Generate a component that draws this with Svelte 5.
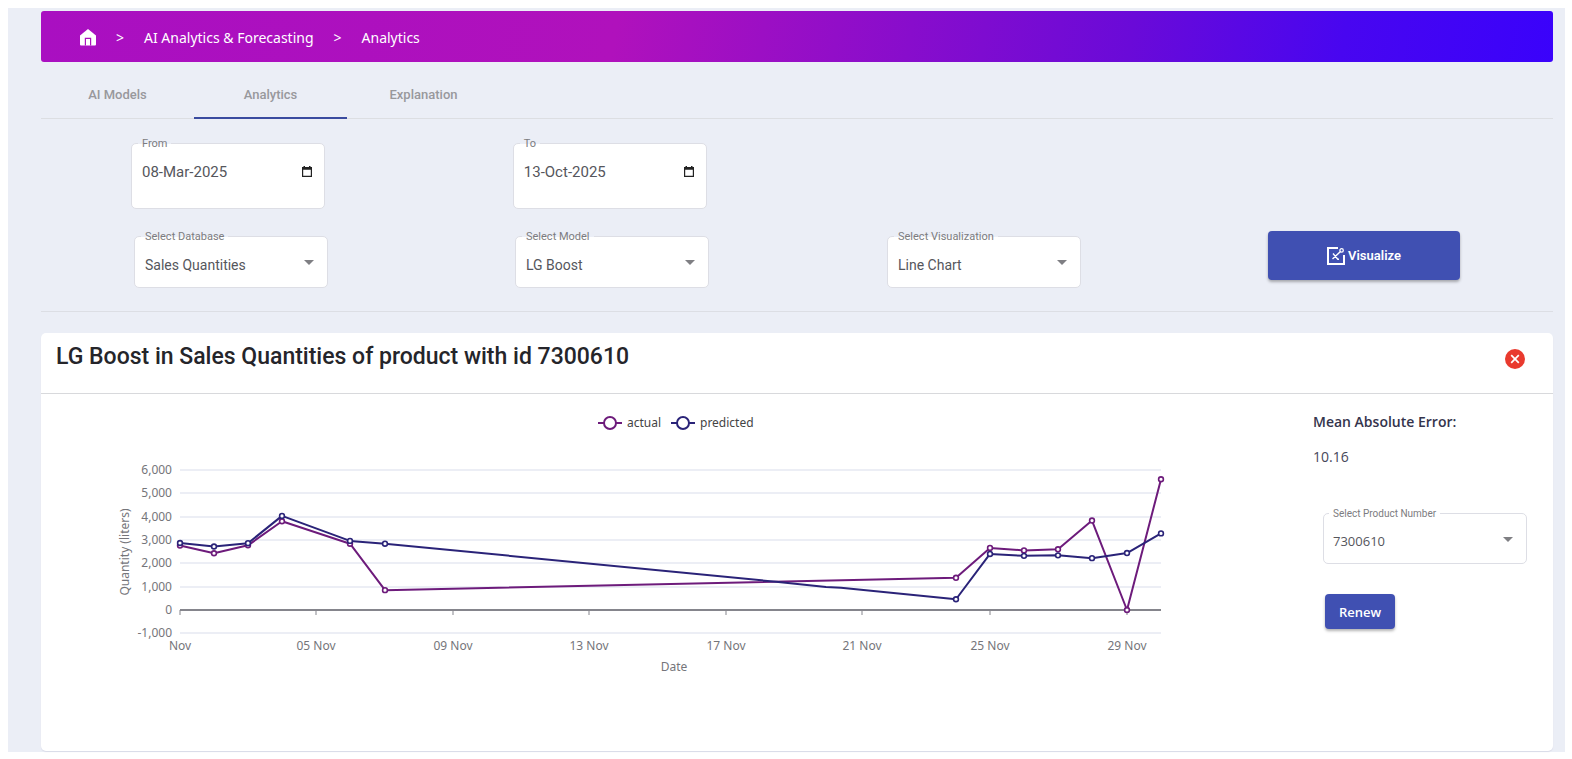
<script lang="ts">
  type Point = [number, number];

  const tabs = ["AI Models", "Analytics", "Explanation"];
  let activeTab = $state("Analytics");

  let from = $state("08-Mar-2025");
  let to = $state("13-Oct-2025");
  let product = $state("7300610");

  // plot area of the chart, in svg units
  const left = 139;
  const right = 1120;
  const zeroY = 216;
  const unit = 0.02335;

  const yTicks = [6000, 5000, 4000, 3000, 2000, 1000, 0, -1000];
  const xTicks = [
    { x: 139, label: "Nov" },
    { x: 275, label: "05 Nov" },
    { x: 412, label: "09 Nov" },
    { x: 548, label: "13 Nov" },
    { x: 685, label: "17 Nov" },
    { x: 821, label: "21 Nov" },
    { x: 949, label: "25 Nov" },
    { x: 1086, label: "29 Nov" },
  ];

  const days = [139, 173, 207, 241, 309, 344, 915, 949, 983, 1017, 1051, 1086, 1120];
  const actual = [2760, 2430, 2770, 3800, 2840, 850, 1380, 2660, 2550, 2600, 3830, 0, 5600];
  const predicted = [2870, 2720, 2860, 4030, 2960, 2840, 460, 2400, 2320, 2340, 2220, 2440, 3280];

  const y = (value: number) => zeroY - value * unit;
  const toPoints = (values: number[]): Point[] => values.map((v, i) => [days[i], y(v)]);

  const actualPoints = toPoints(actual);
  const predictedPoints = toPoints(predicted);
  // the forecast has unmarked values in the gap between the samples
  const predictedLine: Point[] = [
    ...predictedPoints.slice(0, 6),
    [735, y(1210)],
    [785, y(980)],
    [800, y(950)],
    ...predictedPoints.slice(6),
  ];

  const series = [
    { name: "actual", color: "#6d1b7b", line: actualPoints, marks: actualPoints, legendX: 569 },
    { name: "predicted", color: "#2a2378", line: predictedLine, marks: predictedPoints, legendX: 642 },
  ];
</script>

<div class="page">
  <nav class="breadcrumb" aria-label="Breadcrumb">
    <a href="#home" aria-label="Home">
      <svg width="16" height="17" viewBox="0 0 16 17">
        <path d="M8 0 L16 6.5 V15.5 Q16 16.5 15 16.5 H1 Q0 16.5 0 15.5 V6.5 Z" fill="#fff" />
        <path d="M5.4 16.5 V9.4 H10.6 V16.5" fill="none" stroke="#ac12bd" stroke-width="1.2" />
      </svg>
    </a>
    <span>&gt;</span>
    <a href="#forecasting">AI Analytics &amp; Forecasting</a>
    <span>&gt;</span>
    <a href="#analytics">Analytics</a>
  </nav>

  <div class="tabs" role="tablist">
    {#each tabs as tab}
      <button
        class="tab"
        class:active={tab === activeTab}
        role="tab"
        aria-selected={tab === activeTab}
        onclick={() => (activeTab = tab)}>{tab}</button>
    {/each}
  </div>

  <form class="filters" onsubmit={(e) => e.preventDefault()}>
    <div class="row dates">
      <div class="field date">
        <label for="from">From</label>
        <input id="from" type="text" bind:value={from} />
        <button class="picker" type="button" aria-label="Pick start date">
          {@render calendar()}
        </button>
      </div>
      <div class="field date">
        <label for="to">To</label>
        <input id="to" type="text" bind:value={to} />
        <button class="picker" type="button" aria-label="Pick end date">
          {@render calendar()}
        </button>
      </div>
    </div>

    <div class="row">
      <div class="field">
        <label for="database">Select Database</label>
        <select id="database"><option>Sales Quantities</option></select>
      </div>
      <div class="field">
        <label for="model">Select Model</label>
        <select id="model"><option>LG Boost</option></select>
      </div>
      <div class="field">
        <label for="visualization">Select Visualization</label>
        <select id="visualization"><option>Line Chart</option></select>
      </div>
      <button class="primary visualize" type="submit">
        <svg width="18" height="18" viewBox="0 0 18 18" fill="none" stroke="#fff">
          <path d="M11 1 H1 V17 H17 V8" stroke-width="2" />
          <path d="M6 6.5 L11 12.5 M5.5 12 L13.5 4.5 M10.5 12.3 H12" stroke-width="1.4" />
          <circle cx="14.6" cy="3.4" r="1.7" stroke-width="1.3" />
        </svg>
        Visualize
      </button>
    </div>
  </form>

  <section class="card">
    <header>
      <h2>LG Boost in Sales Quantities of product with id {product}</h2>
      <button class="close" aria-label="Close">
        <svg width="20" height="20" viewBox="0 0 20 20">
          <circle cx="10" cy="10" r="10" fill="#e93a2e" />
          <path d="M6.2 6.2 L13.8 13.8 M13.8 6.2 L6.2 13.8" stroke="#fff" stroke-width="1.7" />
        </svg>
      </button>
    </header>

    <div class="card-body">
      <svg class="chart" viewBox="0 0 1252 357" role="img" aria-label="Actual and predicted quantity by date">
        {#each series as s}
          <g stroke={s.color} stroke-width="2">
            <line x1={s.legendX - 12} x2={s.legendX + 12} y1="29" y2="29" />
            <circle cx={s.legendX} cy="29" r="6" fill="#fff" />
          </g>
          <text class="legend" x={s.legendX + 17} y="33">{s.name}</text>
        {/each}

        {#each yTicks as tick}
          <line
            x1={left}
            x2={right}
            y1={Math.round(y(tick))}
            y2={Math.round(y(tick))}
            stroke={tick === 0 ? "#85858c" : "#e6e8f2"}
            stroke-width={tick === 0 ? 2 : 1.5} />
          <text x={left - 8} y={Math.round(y(tick)) + 4} text-anchor="end">{tick.toLocaleString("en-US")}</text>
        {/each}

        {#each xTicks as tick}
          <line x1={tick.x} x2={tick.x} y1={zeroY} y2={zeroY + 5} stroke="#85858c" />
          <text x={tick.x} y="256" text-anchor="middle">{tick.label}</text>
        {/each}

        <text x="633" y="277" text-anchor="middle">Date</text>
        <text x="0" y="0" text-anchor="middle" transform="translate(88 158) rotate(-90)">Quantity (liters)</text>

        {#each series as s}
          <g stroke={s.color} fill="none" stroke-width="2">
            <polyline points={s.line.map((p) => p.join(",")).join(" ")} stroke-linejoin="round" />
            {#each s.marks as [cx, cy]}
              <circle {cx} {cy} r="2.4" fill="#fff" stroke-width="1.6" />
            {/each}
          </g>
        {/each}
      </svg>

      <aside>
        <h3>Mean Absolute Error:</h3>
        <p>10.16</p>
        <div class="field product">
          <label for="product">Select Product Number</label>
          <select id="product" bind:value={product}><option>7300610</option></select>
        </div>
        <button class="primary renew">Renew</button>
      </aside>
    </div>
  </section>
</div>

{#snippet calendar()}
  <svg width="10" height="11" viewBox="0 0 10 11">
    <path d="M0.6 2 H9.4 V10.4 H0.6 Z" fill="none" stroke="#222" stroke-width="1.2" />
    <path d="M0 1 H10 V3.8 H0 Z M1.5 0 H3 V2 H1.5 Z M7 0 H8.5 V2 H7 Z" fill="#222" />
  </svg>
{/snippet}

<style>
  :global(body) {
    background: #fff;
  }

  .page {
    margin: 8px 7px 8px 8px;
    padding: 3px 12px 1px 33px;
    background: #ebeef6;
    font-family: Roboto, sans-serif;
    font-size: 14px;
  }

  button,
  input,
  select {
    font-family: inherit;
    border: none;
    margin: 0;
    padding: 0;
  }

  .breadcrumb {
    display: flex;
    align-items: center;
    gap: 20px;
    height: 51px;
    box-sizing: border-box;
    padding: 2px 39px 0;
    border-radius: 3px;
    background: linear-gradient(100deg, #a90fc1 0%, #b011bc 38%, #6a0ad8 72%, #4806f0 86%, #3a02fb 100%);
    color: #fff;
    font-family: "Noto Sans", sans-serif;
    font-size: 14px;
  }

  .breadcrumb a {
    display: flex;
    color: inherit;
    text-decoration: none;
  }

  .tabs {
    display: flex;
    height: 57px;
    box-sizing: border-box;
    padding-top: 8px;
    border-bottom: 1px solid #dcdee2;
  }

  .tab {
    width: 153px;
    height: 49px;
    padding-top: 2px;
    border-bottom: 2px solid transparent;
    background: none;
    color: #98989c;
    font-size: 13px;
    font-weight: 500;
  }

  .tab.active {
    border-bottom-color: #3a4b9f;
  }

  .filters {
    padding: 24px 0 23px;
    border-bottom: 1px solid #dcdee4;
  }

  .row {
    display: grid;
    grid-template-columns: 381fr 372fr 381fr 285fr;
    padding-left: 93px;
  }

  .dates {
    padding-left: 90px;
    margin-bottom: 22px;
  }

  .field {
    position: relative;
    box-sizing: border-box;
    width: 194px;
    height: 52px;
    margin-top: 5px;
    border: 1px solid #dddee5;
    border-radius: 5px;
    background: #fff;
  }

  .field.date {
    height: 66px;
    margin-top: 0;
  }

  .field label {
    position: absolute;
    top: -7px;
    left: 6px;
    padding: 0 4px;
    background: linear-gradient(#ebeef6 50%, #fff 50%);
    color: #7c7c80;
    font-size: 11px;
    line-height: 14px;
  }

  .field input,
  .field select {
    box-sizing: border-box;
    width: 100%;
    height: 100%;
    padding: 6px 32px 0 10px;
    appearance: none;
    border-radius: inherit;
    background: none;
    color: #55565c;
    font-size: 14px;
  }

  .field.date input {
    padding: 0 32px 8px 10px;
    font-size: 15px;
  }

  .field:not(.date)::after {
    content: "";
    position: absolute;
    top: 23px;
    right: 13px;
    border: 5px solid transparent;
    border-top-color: #7f7f83;
    border-bottom: none;
    pointer-events: none;
  }

  .picker {
    position: absolute;
    top: 22px;
    right: 12px;
    display: flex;
    background: none;
  }

  .primary {
    display: flex;
    align-items: center;
    justify-content: center;
    gap: 3px;
    border-radius: 4px;
    background: #4050b2;
    color: #fff;
    font-weight: 600;
    box-shadow: 0 2px 3px rgba(0, 0, 0, 0.3);
  }

  .visualize {
    width: 192px;
    height: 49px;
    font-size: 13px;
  }

  .card {
    margin-top: 21px;
    border-radius: 5px;
    background: #fff;
    box-shadow: 0 1px 1px #d9dbe8;
  }

  .card header {
    display: flex;
    align-items: center;
    justify-content: space-between;
    height: 61px;
    box-sizing: border-box;
    padding: 0 28px 9px 15px;
    border-bottom: 1px solid #d8d9dc;
  }

  h2 {
    margin: 0;
    padding-bottom: 3px;
    color: #25252a;
    font-size: 23px;
    font-weight: 500;
    line-height: 30px;
  }

  .close {
    display: flex;
    background: none;
  }

  .card-body {
    display: grid;
    grid-template-columns: 1fr 260px;
  }

  .chart {
    width: 100%;
  }

  .chart text {
    fill: #75757a;
    font-family: "Noto Sans", sans-serif;
    font-size: 12px;
  }

  .chart .legend {
    fill: #444;
  }

  aside {
    padding-top: 18px;
    padding-left: 20px;
    font-family: "Open Sans", sans-serif;
    color: #47475a;
  }

  h3 {
    margin: 0;
    color: #34344c;
    font-size: 14px;
    font-weight: 600;
    line-height: 20px;
  }

  aside p {
    margin: 15px 0 0;
    line-height: 20px;
  }

  .product {
    width: 204px;
    height: 51px;
    margin: 46px 0 30px 10px;
  }

  .product label {
    left: 5px;
    background: #fff;
    font-family: Roboto, sans-serif;
    font-size: 10px;
  }

  .field.product select {
    padding: 4px 32px 0 9px;
    font-size: 13px;
  }

  .renew {
    width: 70px;
    height: 35px;
    margin-left: 12px;
    font-size: 13px;
  }
</style>
